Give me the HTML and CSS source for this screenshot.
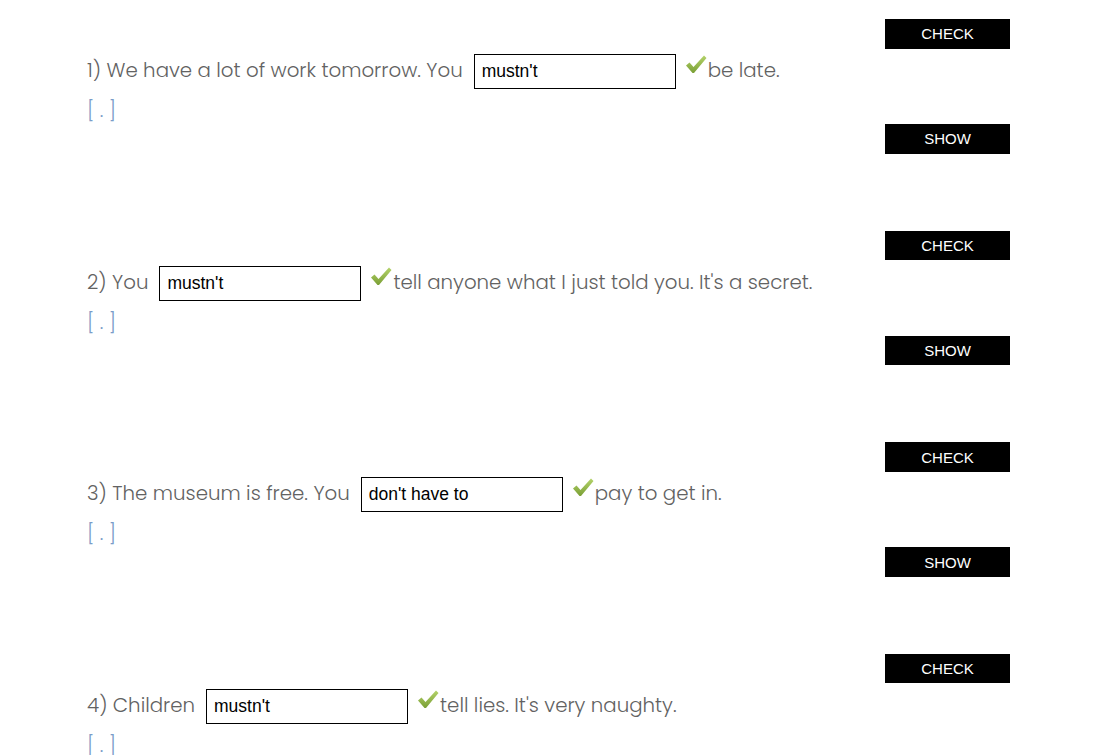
FILE: index.html
```html
<!DOCTYPE html>
<html>
<head>
<meta charset="utf-8">
<link rel="stylesheet" href="styles.css">
</head>
<body>
<div class="quiz">
  <div class="item">
    <div class="q">
      <div class="line">
        <span class="txt">1) We have a lot of work tomorrow. You</span>
        <span class="box">mustn't</span>
        <svg class="tick" viewBox="0 0 22 20" width="22" height="21"><defs><linearGradient id="g1" x1="0" y1="0" x2="0" y2="1"><stop offset="0" stop-color="#b4d36a"/><stop offset="1" stop-color="#7a9f35"/></linearGradient></defs><path d="M1 11 L4.5 8 L8.5 12.5 L19 1 L21.5 3.5 L9 18.5 L7.5 18.5 Z" fill="url(#g1)"/></svg>
        <span class="txt">be late.</span>
      </div>
      <div class="hint">[ . ]</div>
    </div>
    <div class="btns"><span class="btn">CHECK</span><span class="btn">SHOW</span></div>
  </div>
  <div class="item">
    <div class="q">
      <div class="line">
        <span class="txt">2) You</span>
        <span class="box">mustn't</span>
        <svg class="tick" viewBox="0 0 22 20" width="22" height="21"><path d="M1 11 L4.5 8 L8.5 12.5 L19 1 L21.5 3.5 L9 18.5 L7.5 18.5 Z" fill="url(#g1)"/></svg>
        <span class="txt">tell anyone what I just told you. It's a secret.</span>
      </div>
      <div class="hint">[ . ]</div>
    </div>
    <div class="btns"><span class="btn">CHECK</span><span class="btn">SHOW</span></div>
  </div>
  <div class="item">
    <div class="q">
      <div class="line">
        <span class="txt">3) The museum is free. You</span>
        <span class="box">don't have to</span>
        <svg class="tick" viewBox="0 0 22 20" width="22" height="21"><path d="M1 11 L4.5 8 L8.5 12.5 L19 1 L21.5 3.5 L9 18.5 L7.5 18.5 Z" fill="url(#g1)"/></svg>
        <span class="txt">pay to get in.</span>
      </div>
      <div class="hint">[ . ]</div>
    </div>
    <div class="btns"><span class="btn">CHECK</span><span class="btn">SHOW</span></div>
  </div>
  <div class="item">
    <div class="q">
      <div class="line">
        <span class="txt">4) Children</span>
        <span class="box">mustn't</span>
        <svg class="tick" viewBox="0 0 22 20" width="22" height="21"><path d="M1 11 L4.5 8 L8.5 12.5 L19 1 L21.5 3.5 L9 18.5 L7.5 18.5 Z" fill="url(#g1)"/></svg>
        <span class="txt">tell lies. It's very naughty.</span>
      </div>
      <div class="hint">[ . ]</div>
    </div>
    <div class="btns"><span class="btn">CHECK</span><span class="btn">SHOW</span></div>
  </div>
</div>
</body>
</html>
```

FILE: styles.css
```css
html, body {
  margin: 0;
  padding: 0;
  background: #fff;
  overflow: hidden;
}
.quiz {
  display: flex;
  flex-direction: column;
}
.item {
  display: flex;
  flex: none;
  height: 211.67px;
  padding-left: 87px;
  padding-right: 89px;
}
.q {
  flex: 1;
  padding-top: 54px;
  font-family: "Poppins", "Open Sans", sans-serif;
  font-weight: 300;
  font-size: 19.8px;
  color: #626262;
}
.line {
  display: flex;
  align-items: center;
  height: 35px;
  white-space: nowrap;
}
.txt {
  padding-bottom: 3px;
}
.box {
  box-sizing: border-box;
  width: 202px;
  height: 35px;
  margin-left: 11px;
  border: 1px solid #000;
  padding-left: 7px;
  display: flex;
  align-items: center;
  font-family: "Liberation Sans", Arial, sans-serif;
  font-weight: 400;
  font-size: 17.5px;
  color: #000;
}
.tick {
  margin-left: 9px;
  margin-right: 1px;
  margin-top: -14px;
}
.hint {
  margin-top: 8px;
  line-height: 26px;
  color: #7a9cc8;
}
.btns {
  width: 125px;
  padding-top: 19px;
  display: flex;
  flex-direction: column;
  gap: 75.5px;
}
.btn {
  height: 29.5px;
  background: #000;
  color: #fff;
  font-family: "Liberation Sans", Arial, sans-serif;
  font-size: 15px;
  display: flex;
  align-items: center;
  justify-content: center;
}
```
